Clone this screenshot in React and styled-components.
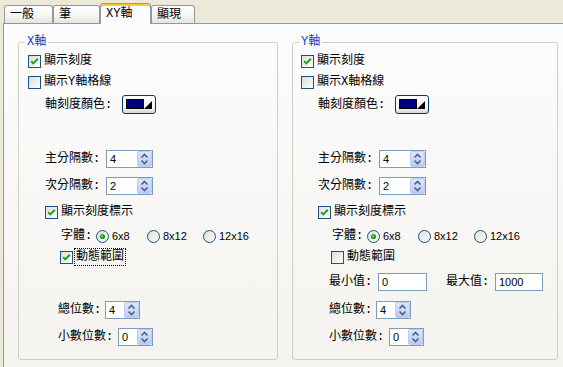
import React from 'react';
import styled, { createGlobalStyle } from 'styled-components';

const Global = createGlobalStyle`
  html, body { margin: 0; padding: 0; background: #ECE9D8; overflow: hidden; }
  body {
    width: 563px; height: 367px;
    font-family: "Liberation Mono", "Noto Sans CJK TC", monospace;
    font-size: 12px; color: #000;
  }
`;

const TEXT = `"Liberation Mono", "Noto Sans CJK TC", monospace`;
const NUM = `"Liberation Sans", Arial, sans-serif`;

const Window = styled.div`
  height: 367px;
  box-sizing: border-box;
  padding-left: 3px;
  display: flex;
  flex-direction: column;
  overflow: hidden;
`;

const TabStrip = styled.div`
  display: flex;
  align-items: flex-end;
  height: 23px;
  padding-left: 1px;
  position: relative;
  z-index: 1;
`;

const Tab = styled.div`
  box-sizing: border-box;
  width: ${(p) => p.$w}px;
  height: ${(p) => (p.$active ? 21 : 18)}px;
  margin-bottom: ${(p) => (p.$active ? -1 : 0)}px;
  border: 1px solid #919B9C;
  border-bottom: none;
  border-top-color: ${(p) => (p.$active ? '#E68B2C' : '#919B9C')};
  border-radius: 3px 3px 0 0;
  background: ${(p) =>
    p.$active ? '#FCFCFE' : 'linear-gradient(#FFFFFF, #F4F4F0 60%, #E6E5DE)'};
  box-shadow: ${(p) => (p.$active ? 'inset 0 2px 0 #FFC73C' : 'none')};
  padding: ${(p) => (p.$active ? 3 : 2)}px 0 0 5px;
  font-family: ${TEXT};
  font-size: 12px;
  line-height: 14px;
  white-space: nowrap;
`;

const Panel = styled.div`
  flex: 1;
  border: 1px solid #919B9C;
  border-right: none;
  border-bottom: none;
  background: linear-gradient(#FCFCFE, #F4F3EE);
  padding: 11px 0 0 14px;
  display: grid;
  grid-template-columns: 260px 266px;
  column-gap: 14px;
  align-items: start;
`;

const Group = styled.fieldset`
  margin: 0;
  padding: 0 0 13px 0;
  min-width: 0;
  border: 1px solid #D0D0BF;
  border-radius: 3px;
  display: flex;
  flex-direction: column;
`;

const Legend = styled.legend`
  margin-left: 6px;
  padding: 0 2px;
  color: #0046D5;
  font-family: ${TEXT};
  font-size: 12px;
  line-height: 14px;
`;

const Row = styled.div`
  display: flex;
  align-items: center;
  height: ${(p) => p.$h || 18}px;
  margin-top: ${(p) => p.$mt}px;
  padding-left: ${(p) => p.$indent}px;
  visibility: ${(p) => (p.$hidden ? 'hidden' : 'visible')};
`;

const Label = styled.span`
  flex: none;
  width: ${(p) => p.$w}px;
  font-family: ${TEXT};
  font-size: 12px;
  line-height: 14px;
  white-space: nowrap;
`;

const CheckWrap = styled.span`
  display: inline-flex;
  align-items: center;
`;

const CheckBox = styled.span`
  flex: none;
  box-sizing: border-box;
  width: 13px;
  height: 13px;
  border: 1px solid #1C5180;
  background: linear-gradient(135deg, #DCDCD7, #FFFFFF);
  display: inline-flex;
  align-items: center;
  justify-content: center;
`;

const CheckText = styled.span`
  margin-left: ${(p) => (p.$focus ? 2 : 3)}px;
  padding: 1px ${(p) => (p.$focus ? 1 : 0)}px;
  outline: ${(p) => (p.$focus ? '1px dotted #000' : 'none')};
  font-family: ${TEXT};
  font-size: 12px;
  line-height: 14px;
  white-space: nowrap;
`;

const Check = ({ checked, focus, label }) => (
  <CheckWrap>
    <CheckBox>
      {checked && (
        <svg width="11" height="11" viewBox="0 0 11 11">
          <path d="M2.2 5.2 L4.3 7.4 L8.8 2.8" fill="none" stroke="#21A121" strokeWidth="2" />
        </svg>
      )}
    </CheckBox>
    <CheckText $focus={focus}>{label}</CheckText>
  </CheckWrap>
);

const RadioItem = styled.span`
  flex: none;
  width: ${(p) => (p.$w ? `${p.$w}px` : 'auto')};
  display: inline-flex;
  align-items: center;
  gap: 3px;
  font-family: ${NUM};
  font-size: 11px;
  line-height: 14px;
  white-space: nowrap;
  & > svg { flex: none; }
`;

const Radio = ({ checked, label, w }) => (
  <RadioItem $w={w}>
    <svg width="13" height="13" viewBox="0 0 13 13">
      <defs>
        <linearGradient id="rgrad" x1="0" y1="0" x2="1" y2="1">
          <stop offset="0" stopColor="#DCDCD7" />
          <stop offset="1" stopColor="#FFFFFF" />
        </linearGradient>
      </defs>
      <circle cx="6.5" cy="6.5" r="6" fill="url(#rgrad)" stroke="#1C5180" />
      {checked && <circle cx="6.5" cy="6.5" r="2.6" fill="#21A121" />}
      {checked && <circle cx="6" cy="6" r="1" fill="#7BD87B" />}
    </svg>
    {label}
  </RadioItem>
);

const SpinBox = styled.div`
  flex: none;
  box-sizing: border-box;
  width: ${(p) => p.$w}px;
  height: 18px;
  border: 1px solid #7F9DB9;
  background: #fff;
  display: flex;
  align-items: stretch;
`;

const FieldValue = styled.span`
  flex: 1;
  padding-left: 3px;
  font-family: ${NUM};
  font-size: 11px;
  line-height: 16px;
`;

const SpinButton = styled.span`
  box-sizing: border-box;
  width: 15px;
  border: 1px solid #BCCCF2;
  border-radius: 2px;
  background: linear-gradient(#DCE6FD, #B9CBF6);
  display: flex;
  align-items: center;
  justify-content: center;
`;

const Spin = ({ w, value }) => (
  <SpinBox $w={w}>
    <FieldValue>{value}</FieldValue>
    <SpinButton>
      <svg width="9" height="12" viewBox="0 0 9 12">
        <path d="M1.5 4.5 L4.5 1.5 L7.5 4.5 M1.5 7.5 L4.5 10.5 L7.5 7.5" fill="none" stroke="#4D6185" strokeWidth="1.6" />
      </svg>
    </SpinButton>
  </SpinBox>
);

const TextField = styled.div`
  flex: none;
  box-sizing: border-box;
  width: ${(p) => p.$w}px;
  height: 18px;
  border: 1px solid #7F9DB9;
  background: #fff;
  display: flex;
`;

const ColorButton = styled.div`
  flex: none;
  box-sizing: border-box;
  width: 34px;
  height: 19px;
  border: 1px solid #003C74;
  border-radius: 3px;
  background: linear-gradient(#FFFFFF, #F3F2EC 75%, #D8D3C6);
  padding: 3px 0 0 3px;
  display: flex;
  align-items: flex-start;
`;

const Swatch = styled.span`
  box-sizing: border-box;
  width: 18px;
  height: 10px;
  border: 1px solid #000;
  background: #000080;
`;

const Arrow = styled.span`
  margin-top: 2px;
  width: 0;
  height: 0;
  border-left: 8px solid transparent;
  border-bottom: 8px solid #000;
`;

const Gap = styled.span`
  flex: none;
  width: ${(p) => p.$w}px;
`;

const AxisGroup = ({ title, gridLabel, dynamic, focus, showRange, dxTop, dxLow }) => (
  <Group>
    <Legend>{title}</Legend>
    <Row $mt={3} $indent={9 + dxTop}>
      <Check checked label="顯示刻度" />
    </Row>
    <Row $mt={3} $indent={9 + dxTop}>
      <Check label={gridLabel} />
    </Row>
    <Row $mt={4} $h={19} $indent={26 + dxTop}>
      <Label $w={77}>軸刻度顏色:</Label>
      <ColorButton>
        <Swatch />
        <Arrow />
      </ColorButton>
    </Row>
    <Row $mt={36} $indent={26 + dxTop}>
      <Label $w={61}>主分隔數:</Label>
      <Spin w={47} value="4" />
    </Row>
    <Row $mt={9} $indent={26 + dxTop}>
      <Label $w={61}>次分隔數:</Label>
      <Spin w={47} value="2" />
    </Row>
    <Row $mt={8} $indent={26 + dxTop}>
      <Check checked label="顯示刻度標示" />
    </Row>
    <Row $mt={6} $indent={42 + dxLow}>
      <Label $w={35}>字體:</Label>
      <Radio checked label="6x8" w={51} />
      <Radio label="8x12" w={56} />
      <Radio label="12x16" />
    </Row>
    <Row $mt={3} $indent={41 + dxLow}>
      <Check checked={dynamic} focus={focus} label="動態範圍" />
    </Row>
    <Row $mt={7} $indent={39 + dxLow} $hidden={!showRange}>
      <Label $w={49}>最小值:</Label>
      <TextField $w={49}><FieldValue>0</FieldValue></TextField>
      <Gap $w={19} />
      <Label $w={49}>最大值:</Label>
      <TextField $w={48}><FieldValue>1000</FieldValue></TextField>
    </Row>
    <Row $mt={10} $indent={39 + dxLow}>
      <Label $w={47}>總位數:</Label>
      <Spin w={35} value="4" />
    </Row>
    <Row $mt={9} $indent={39 + dxLow}>
      <Label $w={60}>小數位數:</Label>
      <Spin w={35} value="0" />
    </Row>
  </Group>
);

const tabs = [
  { label: '一般', w: 49 },
  { label: '筆', w: 47 },
  { label: 'XY軸', w: 51, active: true },
  { label: '顯現', w: 44 },
];

export default function App() {
  return (
    <>
      <Global />
      <Window>
        <TabStrip>
          {tabs.map((t) => (
            <Tab key={t.label} $w={t.w} $active={t.active}>
              {t.label}
            </Tab>
          ))}
        </TabStrip>
        <Panel>
          <AxisGroup title="X軸" gridLabel="顯示Y軸格線" dynamic focus showRange={false} dxTop={0} dxLow={0} />
          <AxisGroup title="Y軸" gridLabel="顯示X軸格線" dynamic={false} showRange dxTop={-1} dxLow={-3} />
        </Panel>
      </Window>
    </>
  );
}
